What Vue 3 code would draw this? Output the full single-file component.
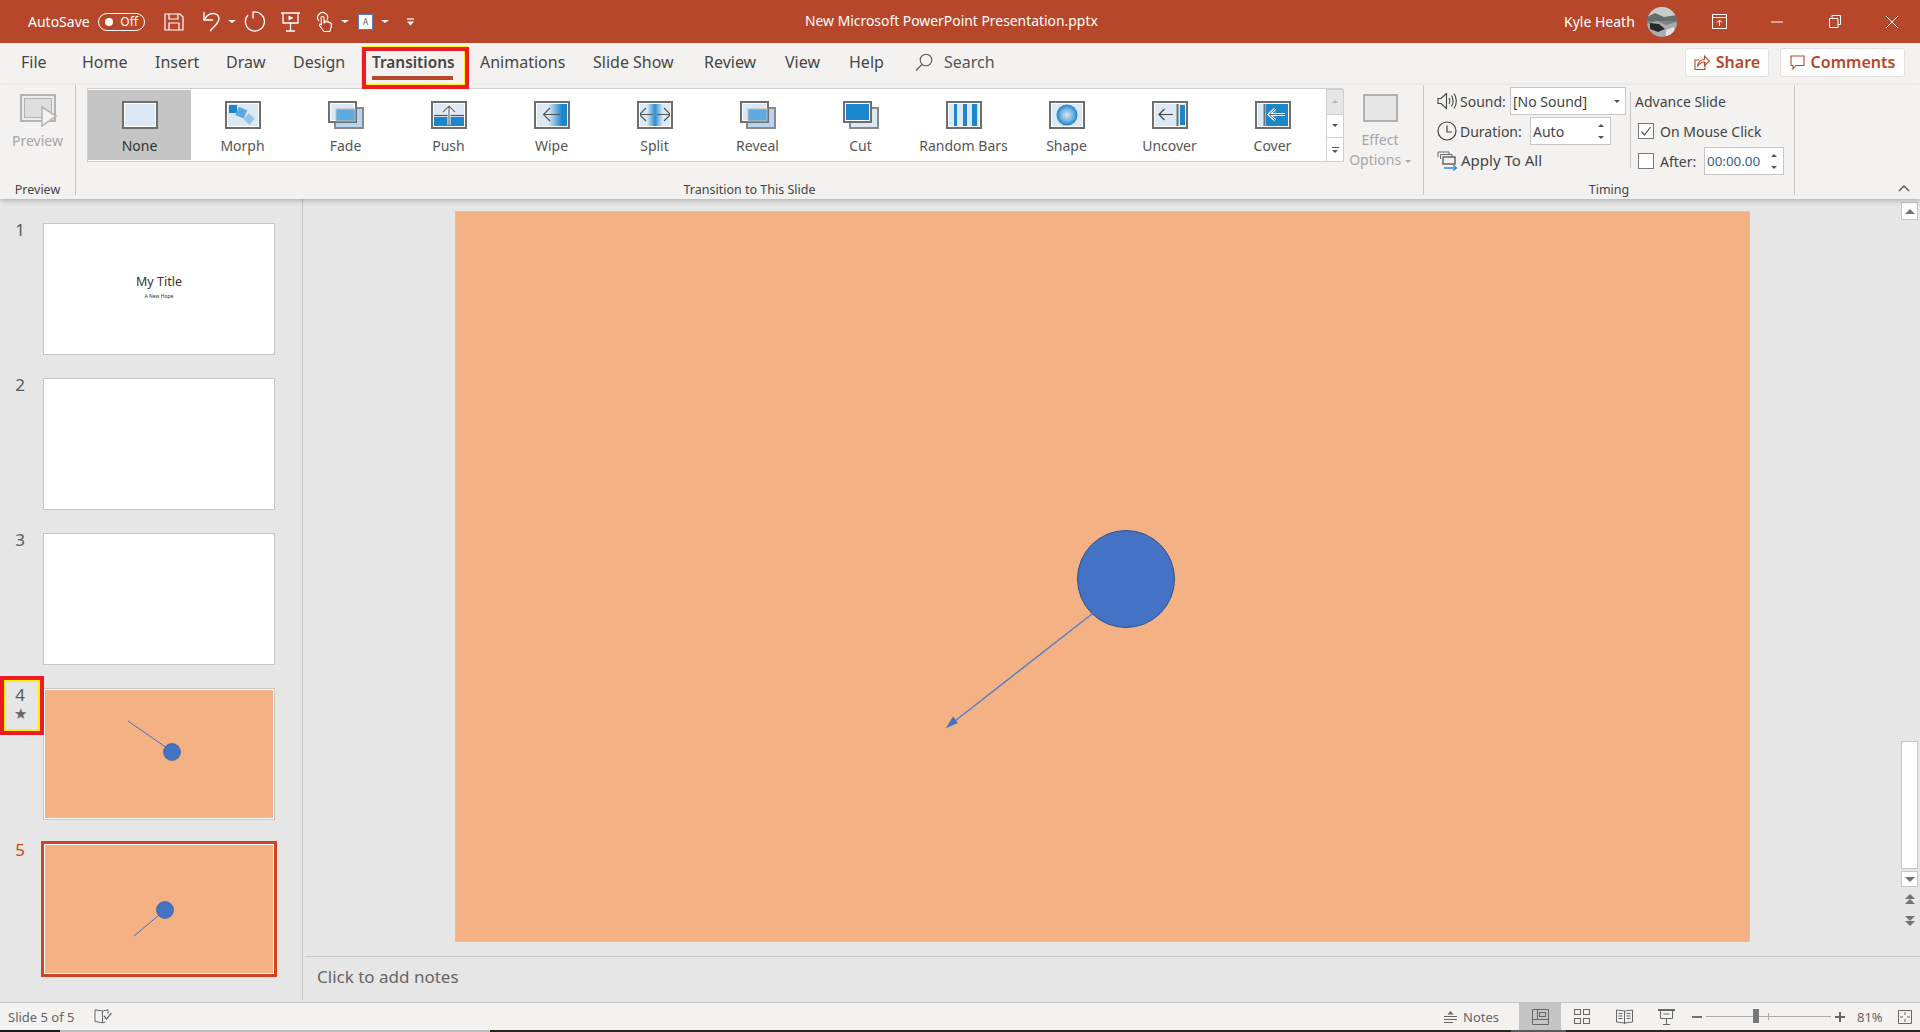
<script setup>
const tabs = [
  { name: 'File', w: 61 },
  { name: 'Home', w: 73 },
  { name: 'Insert', w: 71 },
  { name: 'Draw', w: 67 },
  { name: 'Design', w: 79 },
  { name: 'Transitions', w: 108, active: true },
  { name: 'Animations', w: 113 },
  { name: 'Slide Show', w: 111 },
  { name: 'Review', w: 81 },
  { name: 'View', w: 64 },
  { name: 'Help', w: 66 }
]

const transitions = ['None', 'Morph', 'Fade', 'Push', 'Wipe', 'Split', 'Reveal', 'Cut', 'Random Bars', 'Shape', 'Uncover', 'Cover']

const slides = [
  { n: 1, kind: 'title' },
  { n: 2, kind: 'blank' },
  { n: 3, kind: 'blank' },
  { n: 4, kind: 'up', star: true, flagged: true },
  { n: 5, kind: 'down', active: true }
]
</script>

<template>
  <div class="app">
    <header class="titlebar">
      <div class="qat">
        <span class="autosave">AutoSave</span>
        <span class="toggle"><i class="dot"></i>Off</span>
        <svg class="q-save" width="20" height="18" viewBox="0 0 20 18" fill="none" stroke="#fff" stroke-width="1.2"><path d="M1 1h15l3 3v13H1z"/><path d="M5 1v5h9V1M5 17v-7h10v7"/></svg>
        <svg class="q-undo" width="20" height="21" viewBox="0 0 20 21" fill="none" stroke="#fff" stroke-width="1.3"><path d="M2 1v8h9"/><path d="M2 9l3-4c4-4 11-3 12 2 .6 3-2 6-9 13"/></svg>
        <i class="tri down white q-drop"></i>
        <svg class="q-redo" width="21" height="21" viewBox="0 0 21 21" fill="none" stroke="#fff" stroke-width="1.3"><path d="M4 4A9.500 9.500 0 1 0 9 1.200"/><path d="M9 .5v7"/></svg>
        <svg class="q-present" width="19" height="20" viewBox="0 0 19 20" fill="none" stroke="#fff" stroke-width="1.3"><path d="M0 1h19M2 1v10h15V1M9.500 11v8M5 19h9"/><path d="M7.500 3.500l5 2.500-5 2.500z" fill="#fff" stroke="none"/></svg>
        <svg class="q-touch" width="18" height="21" viewBox="0 0 18 21" fill="none" stroke="#fff" stroke-width="1.1"><path d="M3 10A5 5 0 1 1 11 9"/><path d="M5 7a1.500 1.500 0 0 1 3 0v5l1-.4v-1.600h1.800l.2 1 1.500-.3.500 1 1.500-.2.800 1.500v3l-1.500 4.500H8l-4.500-6 .5-1.500 1.500.6z"/></svg>
        <i class="tri down white q-drop2"></i>
        <span class="a-box">A</span>
        <i class="tri down white q-drop3"></i>
        <svg class="q-custom" width="9" height="8" viewBox="0 0 9 8"><path d="M1 1h7" stroke="#fff" stroke-width="1.200"/><path d="M1 3.500h7L4.500 7.500z" fill="#fff"/></svg>
      </div>
      <div class="doc-title">New Microsoft PowerPoint Presentation.pptx</div>
      <div class="account">
        <span class="user">Kyle Heath</span>
        <svg class="avatar" width="30" height="30" viewBox="0 0 30 30">
          <defs><clipPath id="av"><circle cx="15" cy="15" r="15"/></clipPath></defs>
          <g clip-path="url(#av)">
            <rect width="30" height="30" fill="#7d8283"/>
            <rect width="30" height="10" fill="#c7cccd"/>
            <path d="M0 10l8-4 9 4 13-2v6H0z" fill="#676c6e"/>
            <path d="M0 17l10-3 9 4 11-3v15H0z" fill="#a9acad"/>
            <path d="M3 16l9 1 6 5-7 3-8-3z" fill="#26282a"/>
            <path d="M19 23l8-3 1 7-9 2z" fill="#e2e3e3"/>
          </g>
        </svg>
        <svg class="w-ribbon" width="15" height="15" viewBox="0 0 15 15" fill="none" stroke="#fff"><path d="M.5.500h14v14H.5zM.5 3.500h14M7.500 12V6M5 8.500l2.500-2.500L10 8.500"/></svg>
        <svg class="w-min" width="12" height="2" viewBox="0 0 12 2"><path d="M0 1h12" stroke="#fff"/></svg>
        <svg class="w-restore" width="12" height="13" viewBox="0 0 12 13" fill="none" stroke="#fff"><path d="M.5 3.500h8.500v9H.5zM3 3.500V.5h8.500v9H9"/></svg>
        <svg class="w-close" width="12" height="12" viewBox="0 0 12 12" stroke="#fff"><path d="M0 0l12 12M12 0L0 12"/></svg>
      </div>
    </header>

    <nav class="tabs">
      <div v-for="t in tabs" :key="t.name" class="tab" :class="{ active: t.active }" :style="{ width: t.w + 'px' }">
        {{ t.name }}
        <span v-if="t.active" class="underline"></span>
        <span v-if="t.active" class="tab-flag"></span>
      </div>
      <svg class="search-icon" width="18" height="18" viewBox="0 0 18 18" fill="none" stroke="#555" stroke-width="1.100"><circle cx="11" cy="7" r="5.800"/><path d="M7 11.500L.8 17.500"/></svg>
      <span class="search">Search</span>
      <div class="actions">
        <button class="action share">
          <svg width="16" height="16" viewBox="0 0 16 16" fill="none" stroke="#b7472a" stroke-width="1.100"><path d="M11 8.500V15.500H1V6h4"/><path d="M3.500 12C4 8 7 5.500 10.500 5.500V2l5 5-5 4.500V8C8 8 5.500 9.500 3.500 12z"/></svg>
          Share
        </button>
        <button class="action comments">
          <svg width="15" height="15" viewBox="0 0 15 15" fill="none" stroke="#b7472a" stroke-width="1.100"><path d="M1 1h13v9.500H6L3 14v-3.500H1z"/></svg>
          Comments
        </button>
      </div>
    </nav>

    <section class="ribbon">
      <div class="group group-preview">
        <div class="group-body preview-btn">
          <svg width="37" height="33" viewBox="0 0 37 33" fill="none" stroke="#b4b4b4">
            <rect x="1" y="1" width="34" height="26" stroke-width="2" fill="#ececec"/>
            <rect x="4.500" y="4.500" width="27" height="19" fill="#dedede"/>
            <path d="M22 13l14 9-14 10z" fill="#f3f2f1" stroke-width="1.500"/>
          </svg>
          <span>Preview</span>
        </div>
        <div class="group-label">Preview</div>
      </div>

      <div class="group group-trans">
        <div class="group-body trans-body">
          <div class="gallery">
            <div v-for="name in transitions" :key="name" class="gal-item" :class="{ selected: name === 'None' }">
              <svg width="36" height="28" viewBox="0 0 36 28" class="gal-icon">
                <defs v-if="name === 'Wipe'">
                  <linearGradient id="gWipe"><stop offset=".38" stop-color="#dce9f5"/><stop offset=".82" stop-color="#1b86cc"/></linearGradient>
                </defs>
                <defs v-if="name === 'Split'">
                  <linearGradient id="gSplit"><stop offset=".25" stop-color="#dce9f5"/><stop offset=".5" stop-color="#2c8fd2"/><stop offset=".75" stop-color="#dce9f5"/></linearGradient>
                </defs>
                <defs v-if="name === 'Shape'">
                  <radialGradient id="gShape"><stop offset="0" stop-color="#d6e6f5"/><stop offset=".55" stop-color="#7cb6e4"/><stop offset="1" stop-color="#1b86cc"/></radialGradient>
                </defs>

                <template v-if="name === 'Fade' || name === 'Reveal' || name === 'Cut'">
                  <rect x="7" y="7" width="28" height="20" :fill="name === 'Cut' ? '#dce9f5' : '#b5d5f2'" stroke="#8a8a8a" stroke-width="2"/>
                  <rect x="1" y="1" width="27" height="20" :fill="name === 'Cut' ? '#1b86cc' : '#dce9f5'" stroke="#6e6e6e" stroke-width="2"/>
                  <rect x="2.500" y="2.500" width="24" height="17" fill="none" stroke="#fff"/>
                  <rect v-if="name !== 'Cut'" x="8" y="8" width="19" height="12" fill="#5ea9e0" stroke="#bdbdbd"/>
                </template>
                <template v-else>
                  <rect x="1" y="1" width="34" height="26" fill="#dce9f5"/>
                  <template v-if="name === 'Morph'">
                    <rect x="4" y="4" width="8" height="8" fill="#1b86cc"/>
                    <rect x="12" y="7" width="9" height="9" fill="#5ea9e0" transform="rotate(22 16 11)"/>
                    <rect x="20" y="14" width="8" height="8" fill="#8ec5ee" transform="rotate(42 24 18)"/>
                  </template>
                  <template v-else-if="name === 'Push'">
                    <rect x="2" y="16" width="32" height="10" fill="#1b86cc"/>
                    <path d="M2 14.500h32" stroke="#555" stroke-width="1.200"/>
                    <path d="M18 24V5M12 11l6-6 6 6" fill="none" stroke="#fff" stroke-width="3"/>
                    <path d="M18 24V5M12 11l6-6 6 6" fill="none" stroke="#666" stroke-width="1.200"/>
                  </template>
                  <template v-else-if="name === 'Wipe'">
                    <rect x="2" y="2" width="32" height="24" fill="url(#gWipe)"/>
                    <path d="M26 13.500H10M16 7l-6.500 6.500L16 20" fill="none" stroke="#555" stroke-width="1.200"/>
                  </template>
                  <template v-else-if="name === 'Split'">
                    <rect x="2" y="2" width="32" height="24" fill="url(#gSplit)"/>
                    <path d="M3 13.500h13M20 13.500h13M9 7l-6.500 6.500L9 20M27 7l6.500 6.500L27 20" fill="none" stroke="#555" stroke-width="1.200"/>
                  </template>
                  <template v-else-if="name === 'Random Bars'">
                    <path d="M4 2h6v24H4zM14 2h6v24h-6zM24 2h6v24h-6z" fill="#dce9f5"/>
                    <path d="M8 2h3v24H8zM17 2h4v24h-4zM26 2h5v24h-5z" fill="#1b86cc"/>
                  </template>
                  <circle v-else-if="name === 'Shape'" cx="18" cy="14" r="10.500" fill="url(#gShape)"/>
                  <template v-else-if="name === 'Uncover'">
                    <rect x="28" y="4" width="6" height="20" fill="#1b86cc"/>
                    <path d="M25.500 2v24" stroke="#6e6e6e" stroke-width="2"/>
                    <path d="M21 13.500H7M12.500 8L7 13.500 12.500 19" fill="none" stroke="#444" stroke-width="1.200"/>
                  </template>
                  <template v-else-if="name === 'Cover'">
                    <rect x="11" y="2" width="24" height="25" fill="#1b86cc"/>
                    <path d="M9.500 2v24" stroke="#6e6e6e" stroke-width="2"/>
                    <path d="M30 13.500H14M20 8l-6 5.500L20 19" fill="none" stroke="#fff" stroke-width="3"/>
                    <path d="M30 13.500H14M20 8l-6 5.500L20 19" fill="none" stroke="#666" stroke-width="1"/>
                  </template>
                  <rect x="2.500" y="2.500" width="31" height="23" fill="none" stroke="#fff"/>
                  <rect x="1" y="1" width="34" height="26" fill="none" stroke="#6e6e6e" stroke-width="2"/>
                </template>
              </svg>
              <span class="gal-label">{{ name }}</span>
            </div>
            <div class="gal-scroll">
              <div class="gs-btn gs-up"><i class="tri up light"></i></div>
              <div class="gs-btn gs-mid"><i class="tri down"></i></div>
              <div class="gs-btn gs-more"><b class="more-line"></b><i class="tri down"></i></div>
            </div>
          </div>
          <div class="effect">
            <div class="effect-box"></div>
            <span>Effect</span>
            <span>Options <i class="tri down pale"></i></span>
          </div>
        </div>
        <div class="group-label">Transition to This Slide</div>
      </div>

      <div class="group group-timing">
        <div class="group-body timing-body">
          <div class="t-col t-left">
            <div class="t-row">
              <svg class="t-icon" width="20" height="18" viewBox="0 0 20 18" fill="none" stroke="#444" stroke-width="1.100"><path d="M1 6.500h3L9.500 1.500v15L4 11.500H1z"/><path d="M12 6c1 2 1 4 0 6M14.500 3.500c2 3.500 2 7.500 0 11M17 1.500c2.800 4.500 2.800 10.500 0 15"/></svg>
              <span class="lbl lbl-sound">Sound:</span>
              <div class="field sound">[No Sound]<i class="tri down sel"></i></div>
            </div>
            <div class="t-row">
              <svg class="t-icon" width="20" height="20" viewBox="0 0 20 20" fill="none" stroke="#444" stroke-width="1.200"><circle cx="10" cy="10" r="9"/><path d="M10 4.500V11h5"/></svg>
              <span class="lbl lbl-dur">Duration:</span>
              <div class="field dur">Auto<span class="spin"><i class="tri up"></i><i class="tri down"></i></span></div>
            </div>
            <div class="t-row">
              <svg class="t-icon" width="21" height="20" viewBox="0 0 21 20" fill="none" stroke="#666"><path d="M1 6V1h11v2"/><path d="M3.500 8V3.500H15V6" /><rect x="6" y="6" width="12" height="7" stroke-width="1.500"/><path d="M7 17h12M16 14l3.500 3-3.500 2.500" stroke="#2b8fd6" stroke-width="1.300"/></svg>
              <span class="lbl lbl-apply">Apply To All</span>
            </div>
          </div>
          <div class="t-sep"></div>
          <div class="t-col t-right">
            <div class="t-row adv">Advance Slide</div>
            <div class="t-row">
              <span class="check">
                <svg width="14" height="13" viewBox="0 0 14 13" fill="none" stroke="#555" stroke-width="1.200"><path d="M2.500 6.500l3 3.500 6-8"/></svg>
              </span>
              <span class="lbl">On Mouse Click</span>
            </div>
            <div class="t-row">
              <span class="check"></span>
              <span class="lbl lbl-after">After:</span>
              <div class="field after">00:00.00<span class="spin"><i class="tri up"></i><i class="tri down"></i></span></div>
            </div>
          </div>
        </div>
        <div class="group-label">Timing</div>
      </div>

      <svg class="collapse" width="12" height="7" viewBox="0 0 12 7" fill="none" stroke="#555" stroke-width="1.300"><path d="M1 6l5-5 5 5"/></svg>
    </section>

    <main class="workspace">
      <aside class="slides">
        <div v-for="s in slides" :key="s.n" class="slide-row">
          <div class="slide-num" :class="{ current: s.active }">
            <span>{{ s.n }}</span>
            <span v-if="s.star" class="star">★</span>
            <span v-if="s.flagged" class="num-flag"></span>
          </div>
          <div class="thumb" :class="{ active: s.active }">
            <div v-if="s.kind === 'title'" class="thumb-title">
              <span class="tt-main">My Title</span>
              <span class="tt-sub">A New Hope</span>
            </div>
            <svg v-else-if="s.kind === 'up'" class="thumb-art" viewBox="0 0 228 128">
              <path d="M83 31l39 27" stroke="#4472c4" stroke-width="1"/>
              <circle cx="127" cy="62" r="8.500" fill="#4472c4" stroke="#2f528f" stroke-width=".6"/>
            </svg>
            <svg v-else-if="s.kind === 'down'" class="thumb-art" viewBox="0 0 228 128">
              <path d="M89 91l25-21" stroke="#4472c4" stroke-width="1"/>
              <circle cx="120" cy="65" r="8.500" fill="#4472c4" stroke="#2f528f" stroke-width=".6"/>
            </svg>
          </div>
        </div>
      </aside>

      <div class="editor">
        <div class="canvas-row">
          <div class="canvas">
            <svg class="slide" width="1293" height="729" viewBox="0 0 1293 729">
              <path d="M636 402L497 510.500" stroke="#5b82c8" stroke-width="1.500"/>
              <path d="M491.700 514.700l5.500-9 3.500 5z" fill="#4472c4" stroke="#4472c4" stroke-width="1.500"/>
              <circle cx="670" cy="367" r="48.500" fill="#4472c4" stroke="#2f528f" stroke-width="1"/>
            </svg>
          </div>
          <div class="v-scroll">
            <div class="vs-btn vs-up"><i class="tri up big"></i></div>
            <div class="vs-thumb"></div>
            <div class="vs-btn vs-down"><i class="tri down big"></i></div>
            <div class="vs-page vs-page-up">
              <i class="tri up big"></i><i class="tri up big"></i>
            </div>
            <div class="vs-page vs-page-down">
              <i class="tri down big"></i><i class="tri down big"></i>
            </div>
          </div>
        </div>
        <div class="notes">Click to add notes</div>
      </div>
    </main>

    <footer class="status">
      <span class="slide-count">Slide 5 of 5</span>
      <svg class="proof" width="18" height="15" viewBox="0 0 18 15" fill="none" stroke="#666"><path d="M8.500 2L1 .8v11.700l7.500 1.300zM8.500 2L14 .8v4M8.500 13.800l3-.8"/><path d="M10 7l2.500 3 5-6" stroke-width="1.200"/></svg>
      <div class="status-right">
        <button class="notes-btn">
          <svg width="13" height="14" viewBox="0 0 13 14"><path d="M3.500 4.500L6.500 1l3 3.500z" fill="#666"/><path d="M0 6.500h13M0 9.500h13M0 12.500h9" stroke="#666"/></svg>
          Notes
        </button>
        <div class="view-btn on">
          <svg width="17" height="16" viewBox="0 0 17 16" fill="none" stroke="#666"><path d="M.5.500h16v15H.5zM5.500.5v10M.5 10.500h16"/><rect x="7.500" y="3.500" width="6" height="4"/></svg>
        </div>
        <div class="view-btn">
          <svg width="16" height="15" viewBox="0 0 16 15" fill="none" stroke="#666"><rect x=".5" y=".5" width="6" height="5"/><rect x="9.500" y=".5" width="6" height="5"/><rect x=".5" y="9.500" width="6" height="5"/><rect x="9.500" y="9.500" width="6" height="5"/></svg>
        </div>
        <div class="view-btn">
          <svg width="17" height="16" viewBox="0 0 17 16" fill="none" stroke="#666"><path d="M8.500 2L.5 1v12l8 1 8-1V1zM8.500 2v13M2.500 4.500h4M2.500 7h4M2.500 9.500h4M10.500 4.500h4M10.500 7h4M10.500 9.500h4"/></svg>
        </div>
        <div class="view-btn">
          <svg width="17" height="16" viewBox="0 0 17 16" fill="none" stroke="#666"><path d="M0 1h17" stroke-width="2"/><path d="M2.500 1v8.500h12V1M8.500 9.500V15M5 15.500h7M5.500 5h6"/></svg>
        </div>
        <span class="zoom-minus"></span>
        <div class="slider"><i class="tick"></i><i class="knob"></i></div>
        <span class="zoom-plus"></span>
        <span class="zoom-val">81%</span>
        <svg class="fit" width="14" height="14" viewBox="0 0 14 14" fill="none" stroke="#666"><path d="M.5.500h13v13H.5zM7 2v3M7 9v3M2 7h3M9 7h3"/></svg>
      </div>
    </footer>
    <div class="strip">
      <span class="s-a"></span><span class="s-b"></span><span class="s-c"></span><span class="s-d"></span><span class="s-e"></span>
    </div>
  </div>
</template>

<style>
html, body { margin: 0; background: #e6e6e6; }
</style>

<style scoped>
.app {
  width: 1920px;
  height: 1032px;
  overflow: hidden;
  display: flex;
  flex-direction: column;
  font-family: "Noto Sans", "Open Sans", sans-serif;
  color: #444;
  background: #e6e6e6;
}

/* little triangles, used all over */
.tri { display: inline-block; width: 0; height: 0; border-left: 3px solid transparent; border-right: 3px solid transparent; }
.tri.down { border-top: 3px solid #555; }
.tri.up { border-bottom: 3px solid #555; }
.tri.white { border-top-color: #fff; border-left-width: 4px; border-right-width: 4px; }
.tri.light { border-bottom-color: #b5b5b5; }
.tri.pale { border-top-color: #a8a8a8; vertical-align: middle; }
.tri.big { border-left-width: 5px; border-right-width: 5px; }
.tri.big.up { border-bottom: 5px solid #737373; }
.tri.big.down { border-top: 5px solid #737373; }

.titlebar {
  height: 43px;
  flex: none;
  background: #b7472a;
  color: #fff;
  display: flex;
  align-items: center;
  font-size: 14px;
}
.qat { width: 805px; flex: none; display: flex; align-items: center; padding-left: 28px; box-sizing: border-box; }
.autosave { width: 70px; }
.toggle {
  width: 47px; height: 18px; box-sizing: border-box;
  border: 1px solid #fff; border-radius: 9px;
  display: flex; align-items: center; justify-content: space-between;
  padding: 0 6px 0 6px; font-size: 12px;
}
.dot { width: 8px; height: 8px; background: #fff; border-radius: 50%; }
.q-save { margin-left: 19px; }
.q-undo { margin-left: 18px; }
.q-drop { margin-left: 6px; }
.q-redo { margin-left: 8px; }
.q-present { margin-left: 16px; }
.q-touch { margin-left: 16px; }
.q-drop2 { margin-left: 7px; }
.a-box {
  margin-left: 9px; width: 15px; height: 16px; box-sizing: border-box;
  background: #fff; border: 1px solid #5a7fb5; color: #555;
  font-size: 8px; line-height: 14px; text-align: center;
}
.q-drop3 { margin-left: 8px; }
.q-custom { margin-left: 17px; }
.doc-title { width: 293px; flex: none; white-space: nowrap; margin-top: -3px; font-size: 13.9px; }
.account { flex: 1; display: flex; align-items: center; padding-left: 466px; box-sizing: border-box; }
.user { width: 83px; white-space: nowrap; }
.avatar { flex: none; }
.w-ribbon { margin-left: 35px; }
.w-min { margin-left: 44px; }
.w-restore { margin-left: 46px; }
.w-close { margin-left: 45px; }

.tabs {
  height: 42px;
  flex: none;
  background: #f3f2f1;
  display: flex;
  align-items: center;
  padding: 0 0 4px 21px;
  box-sizing: border-box;
  font-size: 16px;
  color: #484644;
}
.tab { position: relative; white-space: nowrap; flex: none; }
.tab.active { font-weight: 600; font-size: 15.4px; color: #444; }
.underline { position: absolute; left: 0; right: 27px; top: 24px; height: 4px; background: #b7472a; }
.tab-flag {
  position: absolute; left: -10px; top: -5px; width: 107px; height: 42px;
  box-sizing: border-box; border: 4px solid #ed1c24; z-index: 5;
  box-shadow: -1px -1px 0 #fff200, inset -1px -1px 0 #fff200;
}
.search-icon { flex: none; }
.search { margin-left: 11px; color: #555; }
.actions { margin-left: auto; margin-right: 15px; display: flex; gap: 11px; }
.action {
  height: 29px; padding: 0; box-sizing: border-box;
  background: #fff; border: 1px solid #e3e1df; border-radius: 3px;
  color: #b7472a; font: 600 16px "Noto Sans", sans-serif;
  display: flex; align-items: center; justify-content: center; gap: 6px;
}
.share { width: 84px; }
.comments { width: 125px; }

.ribbon {
  height: 114px;
  flex: none;
  display: flex;
  background: #f3f2f1;
  font-size: 14px;
  box-shadow: 0 2px 5px rgba(0, 0, 0, 0.22);
  position: relative;
  z-index: 2;
  padding-bottom: 4px;
  box-sizing: border-box;
}
.group {
  flex: none;
  box-sizing: border-box;
  display: flex;
  flex-direction: column;
  border-right: 1px solid #c8c6c4;
}
.group-body { flex: 1; min-height: 0; }
.group-label { height: 20px; line-height: 20px; font-size: 12.5px; text-align: center; color: #444; margin-bottom: -5px; }
.group-preview { width: 76px; }
.preview-btn { display: flex; flex-direction: column; align-items: center; padding-top: 9px; color: #a6a6a6; font-size: 14px; box-sizing: border-box; }
.preview-btn svg { margin-left: 2px; }
.preview-btn span { line-height: 18px; margin-top: 5px; }

.group-trans { width: 1348px; }
.trans-body { display: flex; padding: 3px 0 0 11px; }
.gallery {
  width: 1256px; height: 74px; box-sizing: border-box; flex: none;
  background: #fff; border: 1px solid #d2d0ce; border-right: none;
  display: flex; padding-top: 1px;
}
.gal-item { width: 103px; height: 70px; flex: none; display: flex; flex-direction: column; align-items: center; padding-top: 11px; box-sizing: border-box; color: #555; }
.gal-item.selected { background: #c5c5c5; color: #333; }
.gal-icon { display: block; flex: none; }
.gal-label { line-height: 20px; margin-top: 7px; white-space: nowrap; }
.gal-scroll { width: 18px; margin: -1px 0 -1px 2px; flex: none; display: flex; flex-direction: column; }
.gs-btn { box-sizing: border-box; border: 1px solid #d2d0ce; display: flex; flex-direction: column; align-items: center; justify-content: center; background: #fff; }
.gs-up { height: 26px; background: #e6e6e6; }
.gs-mid { height: 24px; border-top: none; }
.gs-more { height: 24px; border-top: none; gap: 2px; }
.more-line { width: 7px; height: 1px; background: #555; display: block; }
.effect { width: 74px; flex: none; display: flex; flex-direction: column; align-items: center; color: #a6a6a6; line-height: 20px; padding-top: 6px; box-sizing: border-box; white-space: nowrap; }
.effect-box { width: 35px; height: 28px; box-sizing: border-box; background: #e6e6e6; border: 2px solid #b0b0b0; margin-bottom: 8px; }

.group-timing { width: 371px; }
.timing-body { display: flex; padding: 2px 0 0 13px; box-sizing: border-box; }
.t-col { display: flex; flex-direction: column; gap: 2px; }
.t-left { width: 189px; flex: none; }
.t-right { padding-left: 4px; }
.t-row { height: 28px; display: flex; align-items: center; white-space: nowrap; }
.t-icon { flex: none; }
.lbl { margin-left: 3px; }
.lbl-sound { width: 50px; flex: none; }
.lbl-dur { width: 70px; flex: none; }
.lbl-apply { font-size: 15px; margin-top: -2px; }
.field {
  height: 28px; box-sizing: border-box; background: #fff; border: 1px solid #c8c6c4;
  display: flex; align-items: center; justify-content: space-between; padding: 0 3px 0 2px;
}
.sound { width: 116px; padding-right: 5px; }
.dur { width: 81px; }
.after { width: 80px; color: #37608f; font-size: 13.4px; }
.spin { display: flex; flex-direction: column; gap: 9px; width: 12px; align-items: center; }
.t-sep { width: 1px; height: 76px; background: #c8c6c4; margin: 5px 0 0 4px; flex: none; }
.adv { color: #444; }
.check {
  width: 16px; height: 16px; box-sizing: border-box; background: #fff; border: 1px solid #777;
  margin-left: 3px; display: flex; align-items: center; justify-content: center; flex: none;
}
.check + .lbl { margin-left: 6px; }
.check + .lbl-after { width: 44px; flex: none; }
.collapse { margin: 100px 0 0 103px; flex: none; }

.workspace { flex: 1; min-height: 0; display: flex; }
.slides {
  width: 303px; flex: none; box-sizing: border-box;
  border-right: 1px solid #c8c6c4;
  padding-top: 24px;
  display: flex; flex-direction: column; gap: 23px;
  margin-bottom: 2px;
}
.slide-row { display: flex; height: 132px; }
.slide-num {
  width: 43px; flex: none; box-sizing: border-box; padding: 0 3px 0 0;
  position: relative; text-align: center;
  font-size: 17px; line-height: 20px; color: #595959;
  display: flex; flex-direction: column; align-items: center; margin-top: -3px;
}
.slide-num.current { color: #d04423; }
.star { font-size: 15px; line-height: 17px; color: #666; }
.num-flag {
  position: absolute; left: 0; top: -9px; width: 44px; height: 59px;
  box-sizing: border-box; border: 4px solid #ed1c24;
  box-shadow: inset 0 0 0 2px #fff200;
}
.thumb {
  width: 232px; height: 132px; box-sizing: border-box; flex: none;
  background: #fff; border: 1px solid #c8c6c4; padding: 1px;
}
.thumb.active { border-color: #d04423; box-shadow: 0 0 0 2px #d04423; }
.thumb-art { display: block; width: 100%; height: 100%; background: #f4b183; }
.thumb-title { height: 100%; display: flex; flex-direction: column; align-items: center; justify-content: center; padding-bottom: 4px; box-sizing: border-box; color: #333; }
.tt-main { font-size: 12.5px; line-height: 16px; }
.tt-sub { font-size: 5px; line-height: 8px; margin-top: 2px; }

.editor { flex: 1; min-width: 0; display: flex; flex-direction: column; }
.canvas-row { flex: 1; min-height: 0; display: flex; }
.canvas { flex: 1; display: flex; align-items: center; justify-content: center; padding: 0 0 2px 2px; }
.slide { display: block; background: #f4b183; box-shadow: 0 0 0 1px #c8c6c4; }
.v-scroll { width: 20px; flex: none; box-sizing: border-box; padding: 3px 2px 0 1px; display: flex; flex-direction: column; align-items: stretch; }
.vs-btn, .vs-thumb { background: #fff; border: 1px solid #c8c6c4; box-sizing: border-box; }
.vs-btn { display: flex; align-items: center; justify-content: center; }
.vs-up { height: 18px; }
.vs-thumb { height: 128px; margin-top: 521px; }
.vs-down { height: 16px; margin-top: 2px; }
.vs-page { height: 10px; display: flex; flex-direction: column; align-items: center; }
.vs-page-up { margin-top: 7px; }
.vs-page-down { margin-top: 12px; }
.notes {
  height: 46px; flex: none; box-sizing: border-box;
  border-top: 1px solid #c8c6c4; margin-left: 2px; padding: 8px 0 0 12px;
  font-size: 17px; line-height: 24px; color: #666;
}

.status {
  height: 28px; flex: none; box-sizing: border-box;
  background: #f3f2f1; border-top: 1px solid #c8c6c4;
  display: flex; align-items: center; font-size: 13px; color: #666;
}
.slide-count { margin-left: 8px; width: 86px; }
.status-right { margin-left: auto; display: flex; align-items: center; height: 100%; }
.notes-btn { width: 75px; background: none; border: none; padding: 0; display: flex; align-items: center; gap: 6px; font: 13px "Noto Sans", sans-serif; color: #666; }
.view-btn { width: 42px; height: 100%; display: flex; align-items: center; justify-content: center; }
.view-btn.on { background: #c5c5c5; }
.zoom-minus { width: 10px; height: 2px; background: #737373; margin-left: 5px; }
.slider { width: 125px; height: 1px; background: #aaa; margin-left: 4px; position: relative; }
.knob { position: absolute; left: 47px; top: -7px; width: 6px; height: 14px; background: #777; }
.tick { position: absolute; left: 62px; top: -3px; width: 1px; height: 7px; background: #aaa; }
.zoom-plus { width: 10px; height: 2px; background: #666; margin-left: 4px; position: relative; }
.zoom-plus::after { content: ""; position: absolute; left: 4px; top: -4px; width: 2px; height: 10px; background: #666; }
.zoom-val { margin-left: 12px; width: 41px; }
.fit { margin-right: 8px; }

.strip { height: 2px; flex: none; display: flex; background: #222; }
.strip span { display: block; height: 100%; }
.s-a { width: 60px; background: #1c1c1c; }
.s-b { width: 430px; background: #bdbdbd; }
.s-c { width: 1021px; background: #27261f; }
.s-d { width: 55px; background: #5a5a5a; }
.s-e { flex: 1; background: #27261f; }
</style>
